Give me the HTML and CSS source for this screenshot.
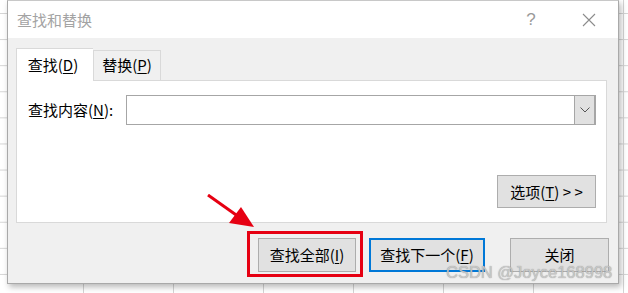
FILE: index.html
```html
<!DOCTYPE html>
<html lang="zh-CN">
<head>
<meta charset="utf-8">
<title>查找和替换</title>
<link rel="stylesheet" href="styles.css">
</head>
<body>
<div class="dialog">
  <div class="titlebar">
    <span class="title">查找和替换</span>
    <span class="help">?</span>
    <span class="close-x">
      <svg width="14" height="14" viewBox="0 0 14 14"><path d="M1 1 L13 13 M13 1 L1 13" stroke="#8c8c8c" stroke-width="1.1" fill="none"/></svg>
    </span>
  </div>
  <div class="body">
    <div class="tabs">
      <div class="tab active">查找(<u>D</u>)</div>
      <div class="tab">替换(<u>P</u>)</div>
    </div>
    <div class="panel">
      <div class="find-row">
        <label class="label">查找内容(<u>N</u>):</label>
        <div class="combo">
          <div class="combo-input"></div>
          <div class="combo-btn">
            <svg width="10" height="6" viewBox="0 0 10 6"><path d="M0.5 0.5 L5 5 L9.5 0.5" stroke="#555" stroke-width="1" fill="none"/></svg>
          </div>
        </div>
      </div>
      <div class="options-row">
        <button class="btn options">选项(<u>T</u>) &gt; &gt;</button>
      </div>
    </div>
    <div class="actions">
      <button class="btn find-all">查找全部(<u>I</u>)</button>
      <button class="btn find-next">查找下一个(<u>F</u>)</button>
      <button class="btn close">关闭</button>
    </div>
  </div>
  <div class="highlight"></div>
  <svg class="arrow" width="60" height="40" viewBox="0 0 60 40">
    <path d="M2 1 L33 23" stroke="#e60012" stroke-width="3" fill="none"/>
    <polygon points="35,13 48,33 23,29" fill="#e60012"/>
  </svg>
  <div class="watermark">CSDN @Joyce168998</div>
</div>
</body>
</html>
```

FILE: styles.css
```css
* { box-sizing: border-box; }

html, body { margin: 0; padding: 0; }

body {
  width: 628px;
  height: 293px;
  overflow: hidden;
  background-color: #ffffff;
  background-image:
    linear-gradient(to bottom, #d4d4d4 1px, transparent 1px),
    linear-gradient(to right, #d4d4d4 1px, transparent 1px);
  background-size: 100% 26.1px, 90px 100%;
  background-position: 0 13px, 83px 0;
  font-family: "Noto Sans CJK SC", sans-serif;
  padding-left: 7px;
}

.dialog {
  position: relative;
  width: 612px;
  height: 284px;
  border: 1px solid #a9a9a9;
  border-top-color: #c8c8c8;
  background: #f0f0f0;
  box-shadow: 2px 3px 6px rgba(0,0,0,0.28);
  display: flex;
  flex-direction: column;
}

.titlebar {
  height: 37px;
  background: #ffffff;
  display: flex;
  align-items: center;
  padding-left: 9px;
  flex-shrink: 0;
}

.title {
  font-size: 15px;
  color: #a3a3a3;
  line-height: 20px;
  flex: 1;
}

.help {
  font-family: "Liberation Sans", sans-serif;
  font-size: 17px;
  color: #9a9a9a;
  width: 12px;
  text-align: center;
  margin-right: 45px;
}

.close-x {
  width: 14px;
  height: 14px;
  margin-right: 22px;
  display: flex;
}

.body {
  flex: 1;
  padding: 10px 9px 0 8px;
  display: flex;
  flex-direction: column;
}

.tabs {
  display: flex;
  align-items: flex-end;
  height: 32px;
  position: relative;
  z-index: 1;
}

.tab {
  height: 30px;
  border: 1px solid #d9d9d9;
  border-bottom: none;
  background: #f0f0f0;
  font-size: 15px;
  line-height: 28px;
  color: #000;
  text-align: center;
  width: 68px;
}

.tab.active {
  height: 33px;
  width: 77px;
  background: #ffffff;
  margin-bottom: -1px;
  line-height: 32px;
  border-right: none;
  padding-right: 4px;
}

.tab u, .label u, .btn u { text-underline-offset: 2px; }

.panel {
  width: 591px;
  height: 143px;
  background: #ffffff;
  border: 1px solid #d9d9d9;
  display: flex;
  flex-direction: column;
  justify-content: space-between;
  padding: 14px 10px 14px 11px;
}

.find-row {
  display: flex;
  align-items: center;
}

.label {
  font-size: 15px;
  line-height: 20px;
  width: 98px;
}

.combo {
  flex: 1;
  height: 30px;
  display: flex;
  border: 1px solid #a6a6a6;
}

.combo-input {
  flex: 1;
  background: #fff;
}

.combo-btn {
  width: 21px;
  background: #e1e1e1;
  border-left: 1px solid #a6a6a6;
  border-right: 1px solid #a6a6a6;
  display: flex;
  align-items: center;
  justify-content: center;
}

.options-row {
  display: flex;
  justify-content: flex-end;
}

.btn {
  font-family: "Noto Sans CJK SC", sans-serif;
  font-size: 15px;
  line-height: 20px;
  color: #000;
  background: #e1e1e1;
  border: 1px solid #adadad;
  padding: 0;
  margin: 0;
}

.options {
  width: 99px;
  height: 33px;
}

.actions {
  display: flex;
  justify-content: flex-end;
  margin-top: 15px;
}

.find-all {
  width: 98px;
  height: 34px;
}

.find-next {
  width: 116px;
  height: 34px;
  margin-left: 13px;
  border: 2px solid #0078d7;
}

.close {
  width: 99px;
  height: 34px;
  margin-left: 25px;
}

.highlight {
  position: absolute;
  left: 239px;
  top: 230px;
  width: 116px;
  height: 46px;
  border: 3.5px solid #e60012;
}

.arrow {
  position: absolute;
  left: 198px;
  top: 193px;
}

.watermark {
  position: absolute;
  left: 438px;
  top: 261px;
  font-family: "Liberation Sans", sans-serif;
  font-size: 16.5px;
  line-height: 20px;
  color: rgba(205,205,205,0.9);
  text-shadow: 0 0 1px rgba(100,100,100,0.7);
  white-space: nowrap;
}
```
